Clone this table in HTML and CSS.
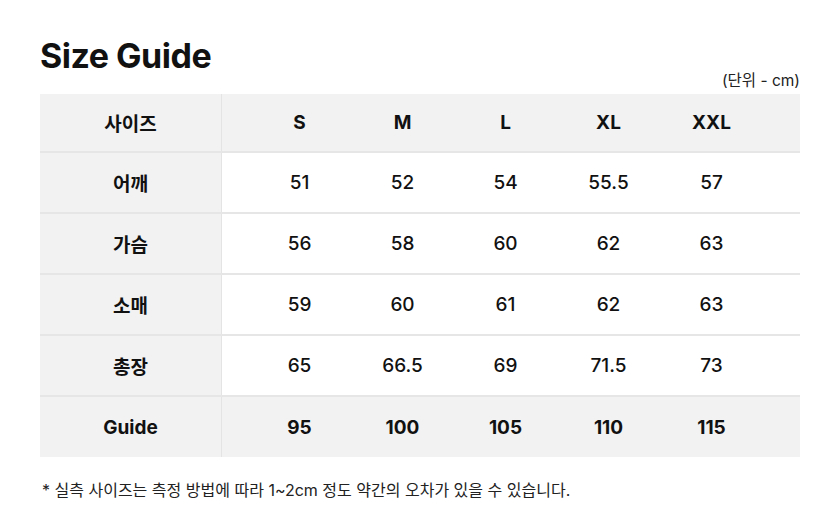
FILE: index.html
```html
<!DOCTYPE html>
<html lang="ko">
<head>
<meta charset="utf-8">
<link rel="stylesheet" href="styles.css">
</head>
<body>
<div class="page">
  <div class="head">
    <h1 class="title">Size Guide</h1>
    <div class="unit">(단위 - cm)</div>
  </div>
  <div class="table">
    <div class="row header">
      <div class="label">사이즈</div>
      <div class="cells"><span>S</span><span>M</span><span>L</span><span>XL</span><span>XXL</span></div>
    </div>
    <div class="row">
      <div class="label">어깨</div>
      <div class="cells"><span>51</span><span>52</span><span>54</span><span>55.5</span><span>57</span></div>
    </div>
    <div class="row">
      <div class="label">가슴</div>
      <div class="cells"><span>56</span><span>58</span><span>60</span><span>62</span><span>63</span></div>
    </div>
    <div class="row">
      <div class="label">소매</div>
      <div class="cells"><span>59</span><span>60</span><span>61</span><span>62</span><span>63</span></div>
    </div>
    <div class="row">
      <div class="label">총장</div>
      <div class="cells"><span>65</span><span>66.5</span><span>69</span><span>71.5</span><span>73</span></div>
    </div>
    <div class="row guide">
      <div class="label">Guide</div>
      <div class="cells"><span>95</span><span>100</span><span>105</span><span>110</span><span>115</span></div>
    </div>
  </div>
  <p class="note">* 실측 사이즈는 측정 방법에 따라 1~2cm 정도 약간의 오차가 있을 수 있습니다.</p>
</div>
</body>
</html>
```
FILE: styles.css
```css
html, body {
  margin: 0;
  padding: 0;
  background: #ffffff;
}
body {
  font-family: Inter, "Noto Sans CJK KR", sans-serif;
  color: #111111;
}
.page {
  width: 760px;
  padding: 34px 0 0 40px;
}
.head {
  display: flex;
  justify-content: space-between;
  align-items: flex-end;
  height: 60px;
}
.title {
  margin: 0;
  font-size: 34px;
  font-weight: 700;
  letter-spacing: -0.5px;
  line-height: 44px;
  align-self: flex-start;
}
.unit {
  font-size: 15.5px;
  line-height: 20px;
  margin-bottom: 3px;
  color: #222;
}
.table {
  display: flex;
  flex-direction: column;
}
.row {
  display: flex;
  height: 59px;
  border-bottom: 2px solid #e6e6e6;
}
.row.header {
  height: 57px;
}
.row:last-child {
  border-bottom: none;
  height: 60px;
}
.header, .guide {
  background: #f2f2f2;
}
.label {
  width: 181px;
  flex: none;
  background: #f2f2f2;
  border-right: 1px solid #e4e4e4;
  display: flex;
  align-items: center;
  justify-content: center;
  font-size: 19px;
  font-weight: 700;
}
.cells {
  display: flex;
  padding-left: 26px;
  align-items: center;
}
.cells span {
  width: 103px;
  text-align: center;
  font-size: 19px;
  font-weight: 500;
}
.header .cells span, .guide .cells span {
  font-weight: 700;
}
.note {
  margin: 23px 0 0 2px;
  font-size: 16px;
  line-height: 20px;
  color: #222;
  letter-spacing: 0;
}
```
